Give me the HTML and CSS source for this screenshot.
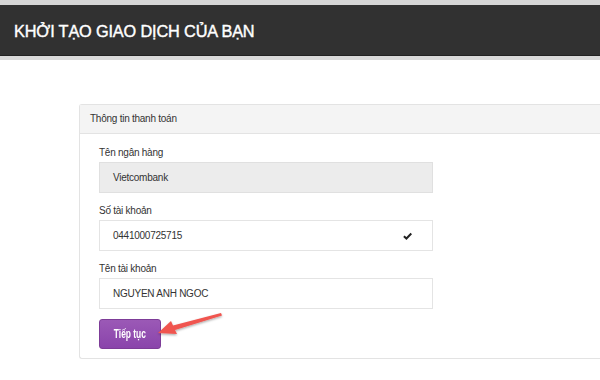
FILE: index.html
```html
<!DOCTYPE html>
<html lang="vi">
<head>
<meta charset="utf-8">
<link rel="stylesheet" href="styles.css">
</head>
<body>
<header class="topbar">
  <h1 class="title">KHỞI TẠO GIAO DỊCH CỦA BẠN</h1>
</header>
<main class="content">
  <section class="panel">
    <div class="panel-heading">Thông tin thanh toán</div>
    <div class="panel-body">
      <div class="field">
        <label class="label">Tên ngân hàng</label>
        <div class="input input-disabled">Vietcombank</div>
      </div>
      <div class="field">
        <label class="label">Số tài khoản</label>
        <div class="input">0441000725715
          <svg class="check" viewBox="0 0 10 8" width="9" height="8"><path d="M1 4.2 L3.8 6.8 L9.2 1.2" fill="none" stroke="#222" stroke-width="2.2" stroke-linejoin="miter"/></svg>
        </div>
      </div>
      <div class="field">
        <label class="label">Tên tài khoản</label>
        <div class="input">NGUYEN ANH NGOC</div>
      </div>
      <div class="actions">
        <button class="btn"><span class="btn-text">Tiếp tục</span></button>
        <svg class="arrow" viewBox="0 0 80 40" width="80" height="40">
          <defs>
            <filter id="sh" x="-20%" y="-50%" width="140%" height="200%">
              <feDropShadow dx="0" dy="1.2" stdDeviation="1" flood-color="#000" flood-opacity="0.35"/>
            </filter>
          </defs>
          <g filter="url(#sh)" fill="#f0544f">
            <path d="M68 4 L69 6.5 L22 21 L24 25 L5 24 L18 12 L20 16.5 Z"/>
          </g>
        </svg>
      </div>
    </div>
  </section>
</main>
</body>
</html>
```
FILE: styles.css
```css
html, body {
  margin: 0;
  padding: 0;
  background: #fff;
  overflow: hidden;
  font-family: "Liberation Sans", Arial, Helvetica, sans-serif;
  color: #333;
}
.topbar {
  border-top: 5px solid #d6d6d6;
  border-bottom: 4px solid #d9d9d9;
  background: #313131;
  box-shadow: inset 0 -1px 0 #222;
  height: 51px;
  display: flex;
  align-items: center;
  padding-left: 14px;
}
.title {
  margin: 0;
  color: #fff;
  font-size: 16.3px;
  font-weight: normal;
  -webkit-text-stroke: 0.4px #fff;
  letter-spacing: -0.15px;
  padding-top: 1px;
}
.content {
  padding: 44px 0 0 79px;
  display: flex;
}
.panel {
  flex: 1;
  border: 1px solid #e3e3e3;
  border-right: none;
  border-radius: 3px 0 0 3px;
  background: #fff;
}
.panel-heading {
  height: 28px;
  line-height: 28px;
  padding-left: 10px;
  background: #f4f4f4;
  border-bottom: 1px solid #e3e3e3;
  font-size: 10px;
  letter-spacing: -0.25px;
  color: #333;
}
.panel-body {
  padding: 10px 0 9px 19px;
  display: flex;
  flex-direction: column;
}
.field {
  display: flex;
  flex-direction: column;
  margin-bottom: 9px;
}
.label {
  font-size: 10px;
  letter-spacing: -0.25px;
  line-height: 17px;
  margin-bottom: 1px;
  color: #333;
}
.input {
  width: 286px;
  height: 29px;
  border: 1px solid #e4e4e4;
  padding: 0 33px 0 13px;
  box-sizing: content-box;
  display: flex;
  align-items: center;
  font-size: 10px;
  letter-spacing: -0.25px;
  color: #333;
  position: relative;
  background: #fff;
}
.input-disabled {
  background: #ececec;
  border-color: #e0e0e0;
}
.check {
  position: absolute;
  right: 20px;
  top: 11px;
}
.actions {
  position: relative;
  margin-top: 1px;
  height: 30px;
}
.btn {
  width: 62px;
  height: 30px;
  border: 1px solid #7d3c98;
  border-radius: 3px;
  background: linear-gradient(#9b59b6, #8a44ab);
  color: #fff;
  font-family: "Liberation Sans", Arial, sans-serif;
  font-weight: bold;
  font-size: 12px;
  padding: 0;
  display: flex;
  align-items: center;
  justify-content: center;
}
.btn-text {
  display: inline-block;
  transform: scaleX(0.7);
  white-space: nowrap;
}
.arrow {
  position: absolute;
  left: 54px;
  top: -10px;
}
```
